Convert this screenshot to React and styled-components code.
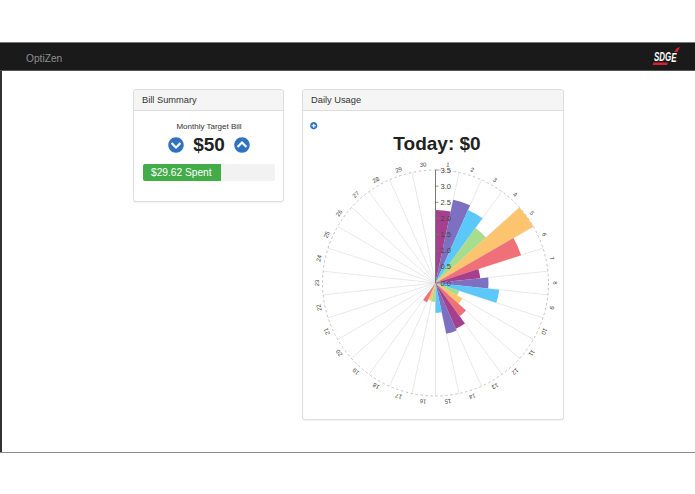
import styled, { createGlobalStyle } from "styled-components";
import { FaChevronCircleDown, FaChevronCircleUp, FaPlusCircle } from "react-icons/fa";

const GlobalStyle = createGlobalStyle`
  html, body {
    margin: 0;
    background: #fff;
    font-family: "Liberation Sans", Arial, sans-serif;
    color: #333;
  }
`;

const Page = styled.div`
  width: 695px;
  height: 494px;
  padding-top: 42px;
  box-sizing: border-box;
`;

const Screen = styled.div`
  height: 411px;
  border-bottom: 1px solid #8c8c8c;
  box-sizing: border-box;
`;

const Navbar = styled.nav`
  height: 29px;
  box-sizing: border-box;
  background: #1a1a1a;
  border-top: 1px solid #777;
  border-bottom: 1px solid #555;
  display: flex;
  align-items: center;
  justify-content: space-between;
  padding: 0 15px 0 26px;
`;

const Brand = styled.span`
  color: #8e8e8e;
  font-size: 10.2px;
  padding-top: 3px;
`;

const Logo = styled.div`
  position: relative;
  width: 28px;
  height: 22px;
  margin-top: 1px;
`;

const LogoMark = styled.svg`
  display: block;
`;

const LogoText = styled.span`
  position: absolute;
  left: 2px;
  top: 4px;
  color: #fff;
  font: italic bold 12px "Liberation Sans", Arial, sans-serif;
  transform: scaleX(0.66);
  transform-origin: left top;
  white-space: nowrap;
`;

const LogoDrop = styled.span`
  position: relative;
  top: 1px;
`;

const Main = styled.main`
  height: 381px;
  border-left: 2px solid #333;
  box-sizing: border-box;
  display: flex;
  justify-content: center;
  align-items: flex-start;
  gap: 18px;
  padding-top: 18px;
`;

const Panel = styled.section`
  width: ${(props) => props.width}px;
  height: ${(props) => props.height}px;
  box-sizing: border-box;
  background: #fff;
  border: 1px solid #ddd;
  border-radius: 3px;
  box-shadow: 0 1px 1px rgba(0, 0, 0, 0.05);
`;

const PanelHeading = styled.h3`
  margin: 0;
  height: 21px;
  box-sizing: border-box;
  padding: 0 8px;
  background: #f5f5f5;
  border-bottom: 1px solid #ddd;
  border-radius: 2px 2px 0 0;
  font-size: 9.3px;
  font-weight: normal;
  line-height: 20px;
  color: #333;
`;

const SummaryBody = styled.div`
  padding: 11px 8px 0 9px;
  display: flex;
  flex-direction: column;
  align-items: stretch;
`;

const TargetLabel = styled.div`
  text-align: center;
  font-size: 8px;
  line-height: 10px;
  color: #333;
`;

const TargetRow = styled.div`
  display: flex;
  align-items: center;
  justify-content: center;
  gap: 7px;
  margin-top: 2px;
  height: 22px;
  color: #2f72c0;
`;

const Amount = styled.span`
  width: 36px;
  text-align: center;
  font-size: 19px;
  font-weight: bold;
  color: #222;
`;

const Progress = styled.div`
  margin-top: 8px;
  height: 17px;
  background: #f2f2f2;
  border-radius: 2px;
  overflow: hidden;
`;

const ProgressBar = styled.div`
  height: 100%;
  background: #43ac49;
  color: #fff;
  font-size: 10.2px;
  line-height: 17px;
  padding-left: 8px;
  box-sizing: border-box;
`;

const UsageBody = styled.div`
  display: flex;
  flex-direction: column;
`;

const AddRow = styled.div`
  height: 8px;
  margin: 11px 0 0 7px;
  color: #2f72c0;
  display: flex;
`;

const Today = styled.h2`
  margin: 1px 0 0;
  text-align: center;
  font-size: 19px;
  line-height: 26px;
  font-weight: bold;
  color: #222;
  padding-left: 8px;
`;

const Chart = styled.svg`
  display: block;
`;

const DayLabel = styled.text`
  font-size: 6px;
  fill: #444;
  text-anchor: middle;
  dominant-baseline: central;
`;

const AxisLabel = styled.text`
  font-size: 7.5px;
  fill: #444;
  dominant-baseline: central;
`;

const COLORS = ["#a6408e", "#7d70c0", "#5cc8fa", "#a9dd8e", "#fdc46f", "#ef7078"];
const RADII = [73, 85, 80, 68, 113, 90, 45, 53, 64, 25, 31, 41, 50, 52, 30, 19, 18, 21];
const CX = 132.5;
const CY = 126;
const R = 113;

const polar = (r, deg) => {
  const a = (deg * Math.PI) / 180;
  return [CX + r * Math.sin(a), CY - r * Math.cos(a)];
};

const slicePath = (r, i) => {
  const [x1, y1] = polar(r, i * 12);
  const [x2, y2] = polar(r, (i + 1) * 12);
  return `M${CX} ${CY}L${x1} ${y1}A${r} ${r} 0 0 1 ${x2} ${y2}Z`;
};

const days = Array.from({ length: 30 }, (_, i) => i);
const ticks = [0, 0.5, 1, 1.5, 2, 2.5, 3, 3.5];

const RadialChart = () => (
  <Chart width="260" height="262" viewBox="0 0 260 262">
    {days.map((i) => {
      const [x, y] = polar(R, i * 12);
      return <line key={i} x1={CX} y1={CY} x2={x} y2={y} stroke="#e2e2e2" strokeWidth="0.8" />;
    })}
    <circle cx={CX} cy={CY} r={R} fill="none" stroke="#b5b5b5" strokeWidth="0.8" strokeDasharray="2.5 2.5" />
    {RADII.map((r, i) => (
      <path key={i} d={slicePath(r, i)} fill={COLORS[i % 6]} />
    ))}
    {days.map((i) => {
      const angle = i * 12 + 6;
      const [x, y] = polar(119, angle);
      return (
        <DayLabel key={i} x={x} y={y} transform={`rotate(${angle} ${x} ${y})`}>
          {i + 1}
        </DayLabel>
      );
    })}
    <line x1={CX} y1={CY} x2={CX} y2={CY - R} stroke="#777" strokeWidth="1" />
    {ticks.map((t) => {
      const y = CY - t * (R / 3.5);
      return (
        <g key={t}>
          <line x1={CX} y1={y} x2={CX + 3} y2={y} stroke="#777" strokeWidth="0.8" />
          <AxisLabel x={CX + 5} y={y}>
            {t.toFixed(1)}
          </AxisLabel>
        </g>
      );
    })}
  </Chart>
);

const App = () => (
  <Page>
    <GlobalStyle />
    <Screen>
      <Navbar>
        <Brand>OptiZen</Brand>
        <Logo>
          <LogoMark width="28" height="22" viewBox="0 0 28 22">
            <polygon points="1.5,16.5 16,16.5 15,19 0.5,19" fill="#d8202f" />
            <polygon points="25,2 28,1 25.5,6 22,6" fill="#d8202f" />
          </LogoMark>
          <LogoText>
            SDG<LogoDrop>E</LogoDrop>
          </LogoText>
        </Logo>
      </Navbar>
      <Main>
        <Panel width={151} height={113}>
          <PanelHeading>Bill Summary</PanelHeading>
          <SummaryBody>
            <TargetLabel>Monthly Target Bill</TargetLabel>
            <TargetRow>
              <FaChevronCircleDown size={16} />
              <Amount>$50</Amount>
              <FaChevronCircleUp size={16} />
            </TargetRow>
            <Progress>
              <ProgressBar style={{ width: "59%" }}>$29.62 Spent</ProgressBar>
            </Progress>
          </SummaryBody>
        </Panel>
        <Panel width={262} height={331}>
          <PanelHeading>Daily Usage</PanelHeading>
          <UsageBody>
            <AddRow>
              <FaPlusCircle size={7.5} />
            </AddRow>
            <Today>Today: $0</Today>
            <RadialChart />
          </UsageBody>
        </Panel>
      </Main>
    </Screen>
  </Page>
);

export default App;
